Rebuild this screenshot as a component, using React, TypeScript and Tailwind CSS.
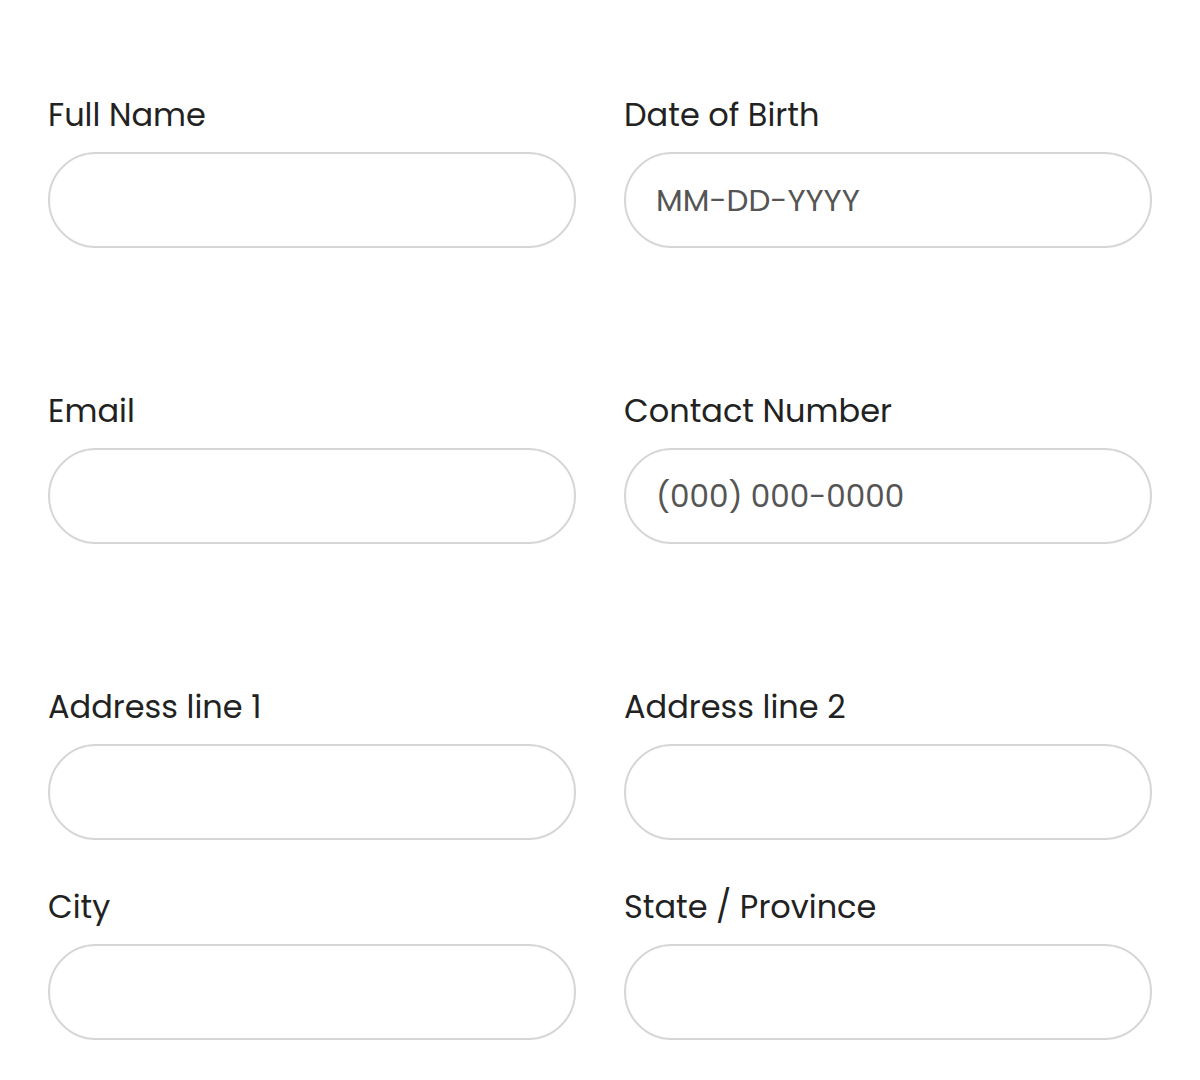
import React from "react"

interface FieldProps {
  label: string
  placeholder?: string
  className?: string
}

function Field({ label, placeholder, className }: FieldProps) {
  return (
    <div className={className}>
      <label className="block text-[32px] leading-[36px] text-[#222222] font-['Poppins','Inter',sans-serif]">
        {label}
      </label>
      <input
        type="text"
        placeholder={placeholder}
        className="mt-[19px] block h-[96px] w-full rounded-full border-2 border-[#d6d6d6] bg-white pl-[30px] pr-8 text-[31px] text-[#333] outline-none placeholder:text-[#555555] font-['Poppins','Lato',sans-serif]"
      />
    </div>
  )
}

export default function App() {
  return (
    <div className="min-h-[1080px] bg-white px-12 pt-[97px]">
      <div className="grid grid-cols-2 gap-x-12">
        <Field label="Full Name" className="pb-[145px]" />
        <Field label="Date of Birth" placeholder="MM-DD-YYYY" className="pb-[145px]" />
        <Field label="Email" className="pb-[145px]" />
        <Field label="Contact Number" placeholder="(000) 000-0000" className="pb-[145px]" />
        <Field label="Address line 1" className="pb-[49px]" />
        <Field label="Address line 2" className="pb-[49px]" />
        <Field label="City" />
        <Field label="State / Province" />
      </div>
    </div>
  )
}
